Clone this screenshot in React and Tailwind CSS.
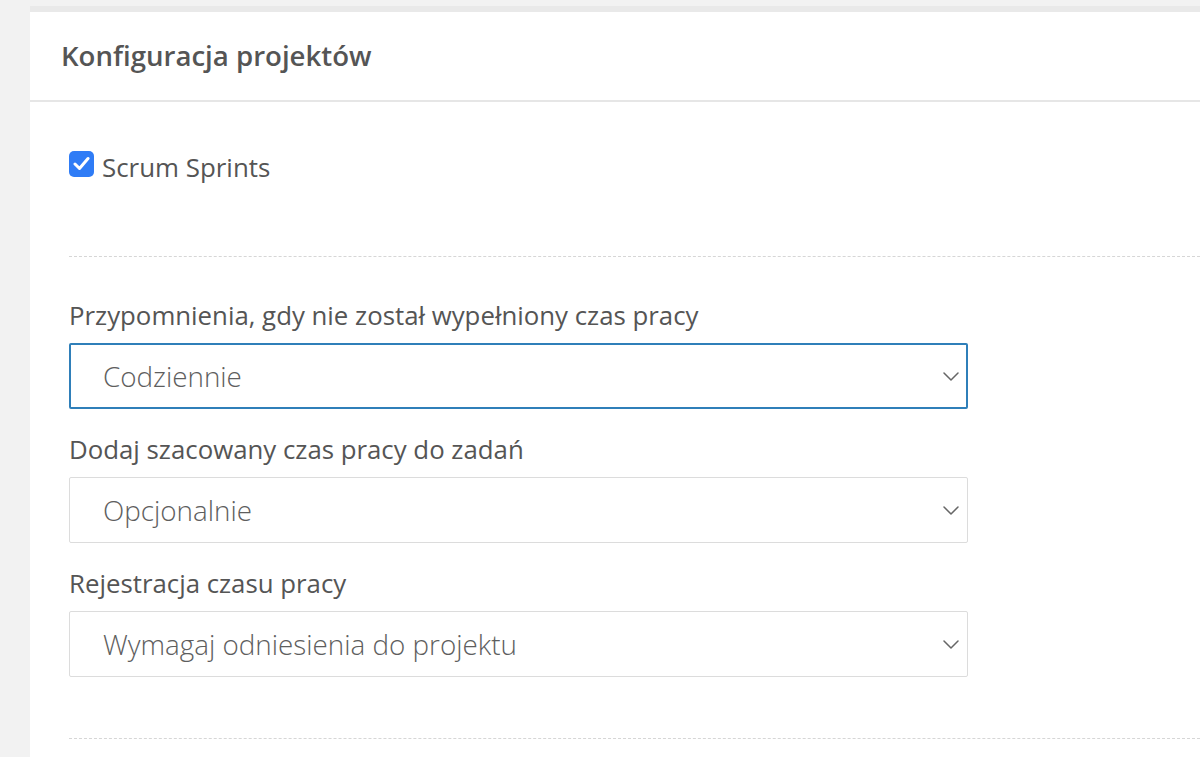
import React, { useState } from "react";

const Chevron = () => (
  <svg width="16" height="9" viewBox="0 0 16 9" fill="none" className="shrink-0">
    <path d="M1 1l7 7 7-7" stroke="#666" strokeWidth="1.5" strokeLinecap="round" strokeLinejoin="round" />
  </svg>
);

const Select = ({ value, focused }) => (
  <div
    className={
      focused
        ? "w-[899px] h-[66px] flex items-center justify-between pl-[32px] pr-[7px] border-2 border-[#2f7fb9] rounded-[2px] bg-white"
        : "w-[899px] h-[66px] flex items-center justify-between pl-[33px] pr-[8px] border border-[#dcdcdc] rounded-[2px] bg-white"
    }
  >
    <span className="text-[27.8px] leading-[36px] text-[#5e5e5e] font-light">{value}</span>
    <Chevron />
  </div>
);

const Field = ({ label, value, focused }) => (
  <div className="flex flex-col">
    <label className="text-[25.8px] leading-[30px] text-[#555] mb-[13px] whitespace-nowrap">{label}</label>
    <Select value={value} focused={focused} />
  </div>
);

export default function App() {
  const [scrum, setScrum] = useState(true);

  return (
    <div
      className="w-[1200px] h-[757px] overflow-hidden bg-[#f2f2f2] pt-[6px]"
      style={{ fontFamily: '"Open Sans", sans-serif' }}
    >
      <div className="h-[6px] ml-[30px] bg-[#e9e9e9]" />
      <div className="ml-[30px] h-full bg-white">
        {/* header */}
        <div className="h-[90px] flex items-center pl-[31px] pb-[2px] border-b-2 border-[#e6e6e6]">
          <h2 className="text-[27.6px] leading-[36px] font-semibold text-[#555]">Konfiguracja projektów</h2>
        </div>

        <div className="pl-[39px]">
          <div className="pt-[44px] pb-[75px] h-[154px] flex items-center gap-[8px]">
            <button
              onClick={() => setScrum(!scrum)}
              className="w-[25px] h-[26px] rounded-[5px] bg-[#2f7cf6] flex items-center justify-center"
            >
              {scrum && (
                <svg width="17" height="15" viewBox="0 0 17 15" fill="none">
                  <path d="M2 8l4.5 4.5L15 2.5" stroke="white" strokeWidth="3" strokeLinecap="round" strokeLinejoin="round" />
                </svg>
              )}
            </button>
            <span className="text-[25.9px] leading-[35px] text-[#555] mt-[7px]">Scrum Sprints</span>
          </div>

          <div className="border-t border-dashed border-[#d6d6d6]" />

          <div className="pt-[43px] flex flex-col gap-[25px]">
            <Field label="Przypomnienia, gdy nie został wypełniony czas pracy" value="Codziennie" focused />
            <Field label="Dodaj szacowany czas pracy do zadań" value="Opcjonalnie" />
            <Field label="Rejestracja czasu pracy" value="Wymagaj odniesienia do projektu" />
          </div>

          <div className="mt-[61px] border-t border-dashed border-[#d6d6d6]" />
        </div>
      </div>
    </div>
  );
}
